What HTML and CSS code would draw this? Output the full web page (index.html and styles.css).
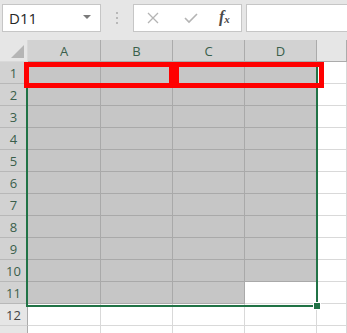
FILE: index.html
```html
<!DOCTYPE html>
<html lang="en">
<head>
  <meta charset="UTF-8">
  <title>Sheet selection</title>
  <link rel="stylesheet" href="styles.css">
</head>
<body>
  <div class="toolbar">
    <div class="name-box">
      <span>D11</span>
      <span class="caret"></span>
    </div>
    <div class="grip">
      <i></i><i></i><i></i>
    </div>
    <div class="fx-buttons">
      <svg width="12" height="12" viewBox="0 0 12 12"><path d="M1 1 L11 11 M11 1 L1 11" stroke="#b4b4b4" stroke-width="1.3" fill="none"/></svg>
      <svg width="14" height="12" viewBox="0 0 14 12"><path d="M1 6 L5 10 L13 2" stroke="#b4b4b4" stroke-width="1.6" fill="none"/></svg>
      <span class="fx">f<sub>x</sub></span>
    </div>
    <div class="formula-input"></div>
  </div>

  <div class="sheet">
    <div class="grid" id="grid"></div>
    <div class="selection"><span class="handle"></span></div>
    <div class="mark mark-ab"></div>
    <div class="mark mark-cd"></div>
  </div>

  <script>
    var grid = document.getElementById("grid");
    var cols = ["A", "B", "C", "D", ""];

    function add(cls, text) {
      var d = document.createElement("div");
      d.className = cls;
      if (text) d.textContent = text;
      grid.appendChild(d);
    }

    // header row
    add("corner", "");
    cols.forEach(function (c, i) {
      add(i < 4 ? "col-head sel" : "col-head", c);
    });

    // rows (13th only peeks in at the bottom, so no label)
    for (var r = 1; r <= 13; r++) {
      add(r <= 11 ? "row-head sel" : "row-head", r < 13 ? String(r) : "");
      for (var c = 0; c < 5; c++) {
        var cls = "cell";
        if (r <= 11 && c < 4) cls += " filled";
        if (r == 11 && c == 3) cls = "cell active";
        add(cls, "");
      }
    }
  </script>
</body>
</html>
```

FILE: styles.css
```css
body {
  margin: 0;
  background: #fff;
  font-family: "Open Sans", "Noto Sans", Arial, sans-serif;
  overflow: hidden;
}
.toolbar {
  height: 40px;
  background: #e6e6e6;
  display: flex;
  align-items: flex-start;
  padding-top: 4px;
  box-sizing: border-box;
}
.name-box {
  margin-left: 2px;
  width: 99px;
  height: 28px;
  box-sizing: border-box;
  background: #fff;
  border: 1px solid #c6c6c6;
  display: flex;
  align-items: center;
  justify-content: space-between;
  padding: 0 9px 0 6px;
  font-size: 15px;
  color: #262626;
}
.caret {
  width: 0;
  height: 0;
  border-left: 4px solid transparent;
  border-right: 4px solid transparent;
  border-top: 4px solid #7a7a7a;
  margin-top: -2px;
}
.grip {
  width: 32px;
  height: 28px;
  display: flex;
  flex-direction: column;
  align-items: center;
  justify-content: center;
  gap: 3px;
}
.grip i {
  width: 2px;
  height: 2px;
  background: #b8b8b8;
}
.fx-buttons {
  width: 109px;
  height: 28px;
  box-sizing: border-box;
  background: #fff;
  border: 1px solid #c6c6c6;
  display: flex;
  align-items: center;
  padding-left: 13px;
  gap: 25px;
}
.fx {
  font-family: "Liberation Serif", "DejaVu Serif", serif;
  font-style: italic;
  font-weight: bold;
  font-size: 16px;
  color: #4a4a4a;
  margin-left: -4px;
  margin-top: -2px;
}
.fx sub {
  font-size: 11px;
  vertical-align: -1px;
}
.formula-input {
  margin-left: 4px;
  flex: 1;
  height: 28px;
  box-sizing: border-box;
  background: #fff;
  border: 1px solid #c6c6c6;
  border-right: none;
}
.sheet {
  position: relative;
}
.grid {
  display: grid;
  grid-template-columns: 28px 73px 72px 72px 72px 1fr;
  grid-auto-rows: 22px;
}
.grid > div {
  box-sizing: border-box;
  border-right: 1px solid #d9d9d9;
  border-bottom: 1px solid #d9d9d9;
  font-size: 13px;
  display: flex;
  align-items: center;
  justify-content: center;
}
.corner {
  background: #e6e6e6;
  position: relative;
}
.corner::after {
  content: "";
  position: absolute;
  right: 3px;
  bottom: 3px;
  width: 0;
  height: 0;
  border-left: 13px solid transparent;
  border-bottom: 13px solid #b5b5b5;
}
.col-head {
  background: #e6e6e6;
  color: #444;
  border-color: #ababab !important;
}
.col-head.sel {
  background: #d2d2d2;
  color: #3a5f4b;
  border-right-color: #ababab !important;
}
.row-head {
  background: #e6e6e6;
  color: #444;
  justify-content: center;
  border-right-color: #ababab !important;
  border-bottom-color: #d0d0d0 !important;
}
.row-head.sel {
  background: #d2d2d2;
  color: #3a5f4b;
  border-bottom-color: #b8b8b8 !important;
}
.cell.filled {
  background: #c6c6c6;
  border-color: #a9a9a9;
}
.cell.active {
  background: #fff;
}
.selection {
  position: absolute;
  left: 26px;
  top: 22px;
  width: 292px;
  height: 245px;
  box-sizing: border-box;
  border: 2px solid #217346;
}
.handle {
  position: absolute;
  right: -5px;
  bottom: -5px;
  width: 6px;
  height: 6px;
  background: #217346;
  border: 1px solid #fff;
}
.mark {
  position: absolute;
  top: 22px;
  height: 26px;
  box-sizing: border-box;
  border: 5px solid #ff0000;
}
.mark-ab {
  left: 24px;
  width: 150px;
}
.mark-cd {
  left: 174px;
  width: 150px;
}
```
